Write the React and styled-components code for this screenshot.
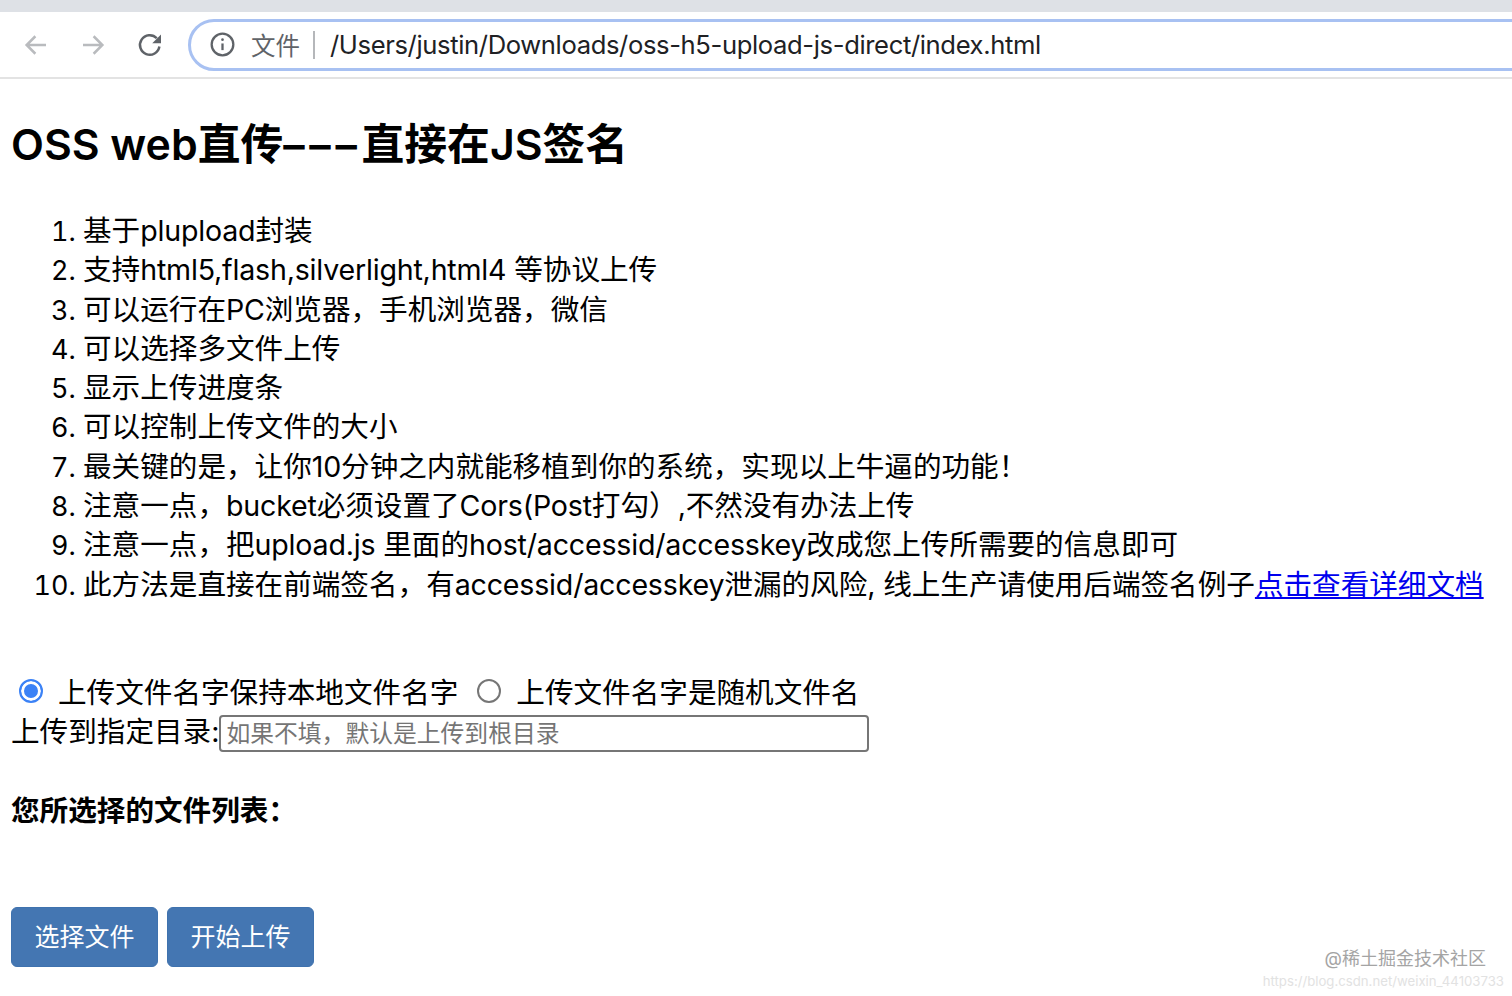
import styled, { createGlobalStyle } from "styled-components"

const GlobalStyle = createGlobalStyle`
    html, body {
        margin: 0;
        padding: 0;
        background: #fff;
    }
    body {
        width: 1512px;
        height: 996px;
        overflow: hidden;
        position: relative;
        color: #000;
        font-family: "Inter", "Noto Sans CJK SC", sans-serif;
    }
`

const items = [
    "基于plupload封装",
    "支持html5,flash,silverlight,html4 等协议上传",
    "可以运行在PC浏览器，手机浏览器，微信",
    "可以选择多文件上传",
    "显示上传进度条",
    "可以控制上传文件的大小",
    "最关键的是，让你10分钟之内就能移植到你的系统，实现以上牛逼的功能！",
    "注意一点，bucket必须设置了Cors(Post打勾）,不然没有办法上传",
    "注意一点，把upload.js 里面的host/accessid/accesskey改成您上传所需要的信息即可",
    "此方法是直接在前端签名，有accessid/accesskey泄漏的风险, 线上生产请使用后端签名例子",
]

// latin runs come out a bit too wide in Inter, so they get tightened on their own
function mixed(text) {
    return text.split(/([\x20-\x7e]+)/).map((part, i) =>
        i % 2 ? <Latin key={i}>{part}</Latin> : part
    )
}

export default function App() {
    return (
        <>
            <GlobalStyle />
            <TabStrip />
            <Toolbar>
                <NavIcon viewBox="0 0 24 24" $color="#b9bbbe">
                    <path d="M20 12H4.5M11.5 5l-7 7 7 7" />
                </NavIcon>
                <NavIcon viewBox="0 0 24 24" $color="#b9bbbe">
                    <path d="M4 12h15.5M12.5 5l7 7-7 7" />
                </NavIcon>
                <NavIcon viewBox="0 0 24 24" $color="#5f6368">
                    <path d="M19.5 13.2A7.8 7.8 0 1 1 17.4 6.6" />
                    <path d="M20.8 3.6v7h-7z" fill="#5f6368" stroke="none" />
                </NavIcon>
                <Omnibox>
                    <InfoIcon viewBox="0 0 24 24">
                        <circle cx="12" cy="12" r="10.4" />
                        <path d="M12 11v6.4" />
                        <circle cx="12" cy="7.4" r="1.3" fill="#5f6368" stroke="none" />
                    </InfoIcon>
                    <Scheme>文件</Scheme>
                    <Divider />
                    <Url>/Users/justin/Downloads/oss-h5-upload-js-direct/index.html</Url>
                </Omnibox>
            </Toolbar>
            <Page>
                <Title>OSS web直传<Dashes>–––</Dashes>直接在JS签名</Title>
                <List>
                    {items.map((text, i) => (
                        <li key={text}>
                            {mixed(text)}
                            {i === items.length - 1 && <DocLink href="#">点击查看详细文档</DocLink>}
                        </li>
                    ))}
                </List>
                <RadioRow>
                    <Radio $checked />
                    <RadioLabel>上传文件名字保持本地文件名字</RadioLabel>
                    <Radio />
                    <RadioLabel>上传文件名字是随机文件名</RadioLabel>
                </RadioRow>
                <DirRow>
                    上传到指定目录:
                    <DirInput placeholder="如果不填，默认是上传到根目录" readOnly />
                </DirRow>
                <FileTitle>您所选择的文件列表：</FileTitle>
                <Buttons>
                    <Btn>选择文件</Btn>
                    <Btn>开始上传</Btn>
                </Buttons>
            </Page>
            <Watermark>
                <Juejin>@稀土掘金技术社区</Juejin>
                <Csdn>https://blog.csdn.net/weixin_44103733</Csdn>
            </Watermark>
        </>
    )
}

const TabStrip = styled.div`
    height: 12px;
    background: #dee1e6;
`

const Toolbar = styled.div`
    height: 65px;
    box-sizing: content-box;
    display: flex;
    align-items: center;
    padding-left: 21px;
    border-bottom: 2px solid #e3e3e3;
    background: #fff;
    overflow: hidden;
`

const NavIcon = styled.svg`
    width: 30px;
    height: 30px;
    margin-right: 27px;
    flex: none;
    fill: none;
    stroke: ${(p) => p.$color};
    stroke-width: 2;
`

const Omnibox = styled.div`
    flex: none;
    width: 1400px;
    height: 46px;
    margin-left: -4px;
    display: flex;
    align-items: center;
    padding-left: 19px;
    border: 3px solid #a8c1f2;
    border-radius: 26px;
    background: #fff;
`

const InfoIcon = styled.svg`
    width: 25px;
    height: 25px;
    flex: none;
    fill: none;
    stroke: #5f6368;
    stroke-width: 2.2;
`

const Scheme = styled.span`
    margin-left: 16px;
    font-size: 24.5px;
    color: #5f6368;
`

const Divider = styled.span`
    width: 2px;
    height: 28px;
    margin: 0 15px 0 13px;
    background: #b5b7ba;
`

const Url = styled.span`
    font-size: 25.6px;
    letter-spacing: -0.37px;
    color: #202124;
    white-space: nowrap;
`

const Page = styled.div`
    padding: 0 11px;
    font-size: 28.6px;
    line-height: 39.3px;
`

const Title = styled.h1`
    margin: 41px 0 41px;
    font-size: 42.8px;
    line-height: 50px;
    font-weight: 600;
    white-space: nowrap;
`

const Dashes = styled.span`
    letter-spacing: 4.7px;
`

const List = styled.ol`
    margin: 0 0 69px;
    padding-left: 72px;
    white-space: nowrap;

    li::marker {
        font-size: 27px;
    }
`

const Latin = styled.span`
    letter-spacing: -0.2px;
`

const DocLink = styled.a`
    color: #0000ee;
    text-decoration: underline;
`

const RadioRow = styled.div`
    display: flex;
    align-items: center;
    height: 39px;
`

const Radio = styled.span`
    flex: none;
    box-sizing: border-box;
    width: 24px;
    height: 24px;
    margin: -2px 15px 0 8px;
    border-radius: 50%;
    background: ${(p) => (p.$checked ? "#3b82f6" : "#fff")};
    border: 2px solid ${(p) => (p.$checked ? "#3b82f6" : "#767676")};
    box-shadow: ${(p) => (p.$checked ? "inset 0 0 0 3px #fff" : "none")};
`

const RadioLabel = styled.span`
    margin-right: 11px;
`

const DirRow = styled.div`
    display: flex;
    align-items: center;
    height: 40px;
`

const DirInput = styled.input`
    box-sizing: border-box;
    width: 650px;
    height: 37px;
    margin-top: 4px;
    padding: 0 5px;
    border: 2px solid #767676;
    border-radius: 4px;
    font-family: inherit;
    font-size: 23.8px;
    outline: none;

    &::placeholder {
        color: #757575;
    }
`

const FileTitle = styled.h4`
    margin: 39px 0 0;
    font-size: 28.6px;
    line-height: 39px;
    font-weight: 700;
`

const Buttons = styled.div`
    display: flex;
    gap: 9px;
    margin-top: 77px;
`

const Btn = styled.button`
    width: 147px;
    height: 60px;
    padding: 0 0 3px;
    border: 1px solid #3f72ae;
    border-radius: 6px;
    background: #4476b2;
    color: #fff;
    font-family: inherit;
    font-size: 25px;
`

const Watermark = styled.div`
    position: absolute;
    right: 8px;
    bottom: 6px;
    display: flex;
    flex-direction: column;
    align-items: flex-end;
`

const Juejin = styled.div`
    margin-right: 18px;
    font-size: 18px;
    line-height: 26px;
    color: #a4a4a4;
`

const Csdn = styled.div`
    font-size: 13.2px;
    line-height: 18px;
    color: #e2e2e2;
    white-space: nowrap;
`
